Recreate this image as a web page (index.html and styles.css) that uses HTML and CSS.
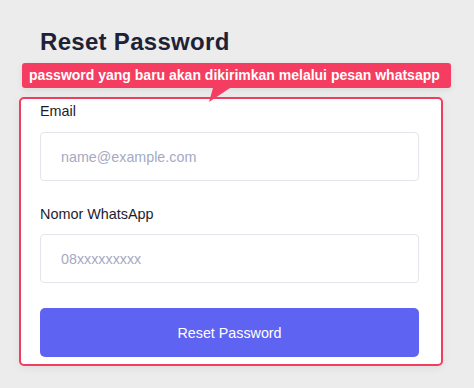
FILE: index.html
```html
<!DOCTYPE html>
<html lang="id">
<head>
<meta charset="utf-8">
<title>Reset Password</title>
<link rel="stylesheet" href="styles.css">
</head>
<body>
<main class="page">
  <h1 class="title">Reset Password</h1>
  <div class="card-wrap">
    <div class="tooltip">password yang baru akan dikirimkan melalui pesan whatsapp</div>
    <form class="card">
      <label class="label" for="email">Email</label>
      <input class="input" id="email" type="email" placeholder="name@example.com">
      <label class="label label-2" for="wa">Nomor WhatsApp</label>
      <input class="input input-2" id="wa" type="text" placeholder="08xxxxxxxxx">
      <button class="btn" type="button">Reset Password</button>
    </form>
  </div>
</main>
</body>
</html>
```
FILE: styles.css
```css
* { box-sizing: border-box; }
html, body { margin: 0; padding: 0; }
body {
  background: #ececec;
  font-family: "Liberation Sans", Arial, Helvetica, sans-serif;
  width: 474px;
  height: 388px;
  overflow: hidden;
}
.page {
  padding: 27px 0 0 19px;
}
.title {
  margin: 0 0 0 21px;
  font-size: 24px;
  line-height: 30px;
  font-weight: 700;
  letter-spacing: 0.3px;
  color: #1f2236;
}
.card-wrap {
  position: relative;
  margin-top: 40px;
  width: 424px;
}
.card {
  display: flex;
  flex-direction: column;
  background: #ffffff;
  border: 2px solid #f03e5f;
  border-radius: 5px;
  padding: 2px 22px 7px 19px;
  box-shadow: 0 2px 10px rgba(0, 0, 0, 0.06);
}
.label {
  font-size: 14.4px;
  line-height: 20px;
  color: #1c1d2b;
}
.label-2 { margin-top: 23px; }
.input {
  margin-top: 11px;
  height: 49px;
  border: 1px solid #e4e5ea;
  border-radius: 4px;
  padding: 0 20px;
  font-family: inherit;
  font-size: 14.3px;
  color: #1c1d2b;
  background: #fff;
  outline: none;
}
.input-2 { margin-top: 10px; }
.input::placeholder { color: #a6a9c3; }
.btn {
  margin-top: 25px;
  height: 49px;
  border: none;
  border-radius: 5px;
  background: #5f63f1;
  color: #ffffff;
  font-family: inherit;
  font-size: 14.3px;
}
.tooltip {
  position: absolute;
  top: -34px;
  left: 3px;
  width: 429px;
  height: 25px;
  padding: 0 0 0 7px;
  background: #f43d60;
  color: #fff;
  border-radius: 3px;
  font-size: 14px;
  font-weight: 700;
  line-height: 25px;
  white-space: nowrap;
  box-shadow: 0 2px 6px rgba(0, 0, 0, 0.08);
  z-index: 2;
}
.tooltip::after {
  content: "";
  position: absolute;
  left: 187px;
  top: 25px;
  width: 21px;
  height: 14px;
  background: #f43d60;
  clip-path: polygon(4px 0, 21px 0, 0 14px);
}
```
